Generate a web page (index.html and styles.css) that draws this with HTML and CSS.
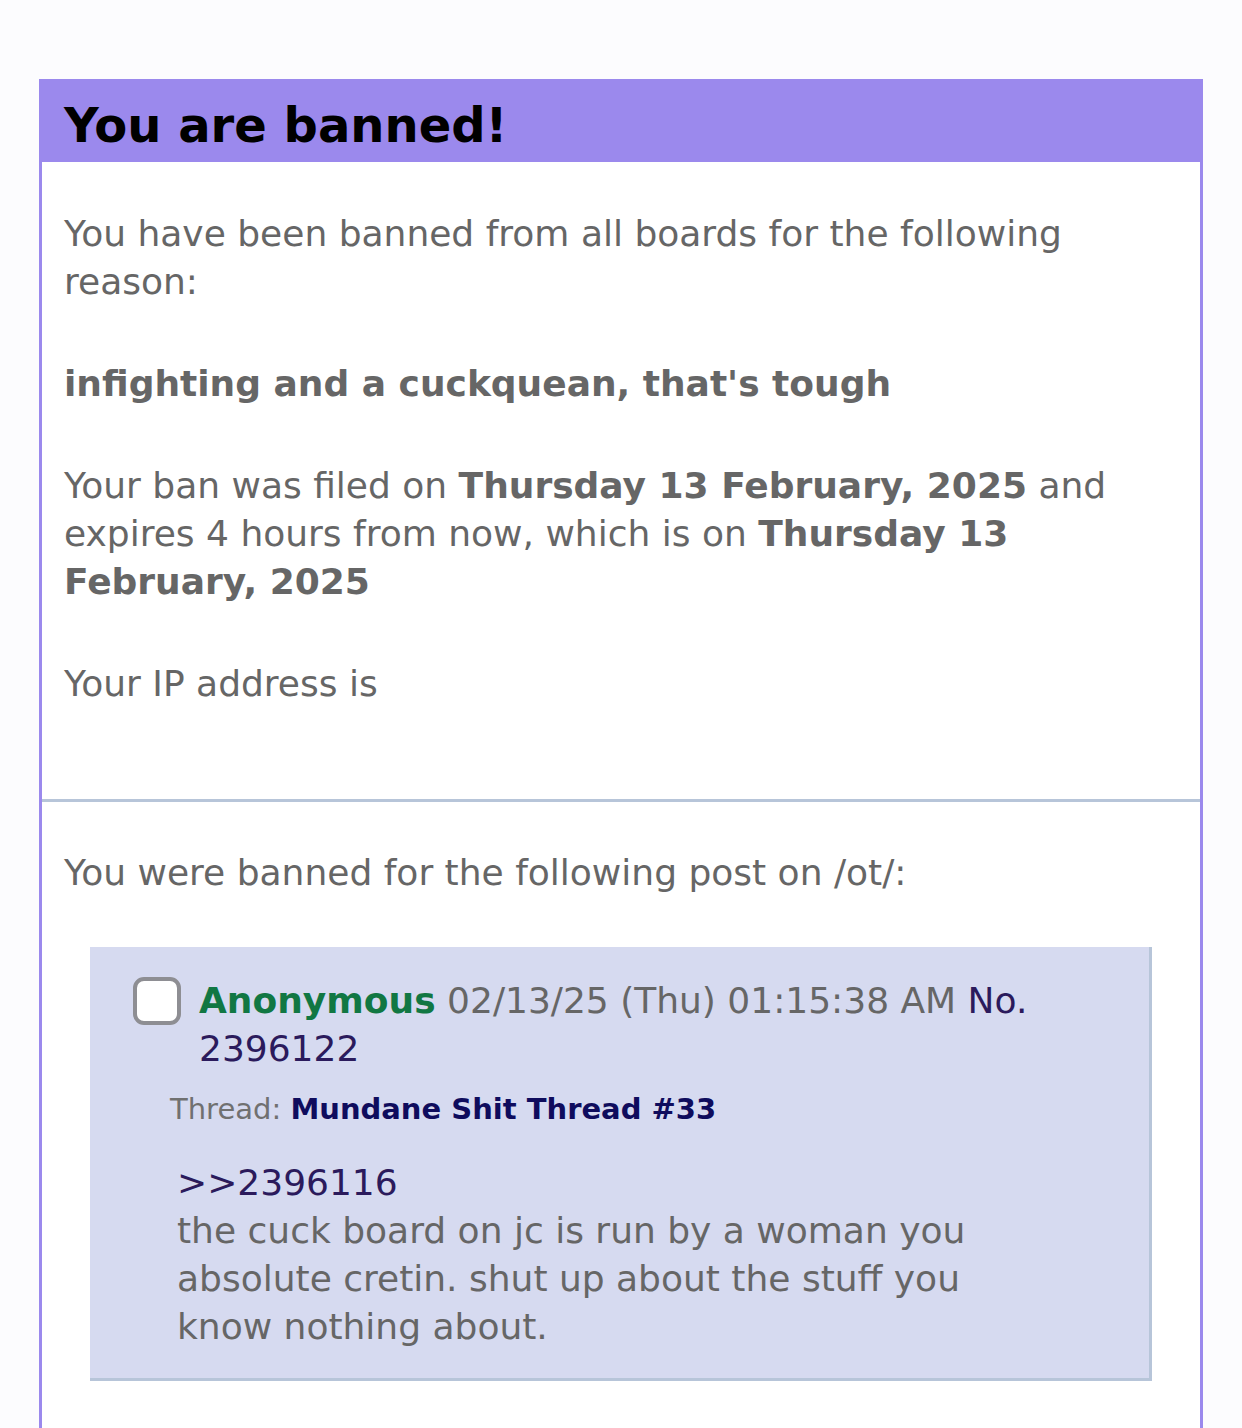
FILE: index.html
```html
<!DOCTYPE html>
<html lang="en">
<head>
    <meta charset="UTF-8">
    <meta name="viewport" content="width=device-width, initial-scale=1.0">
    <title>Banned</title>
    <link rel="stylesheet" href="styles.css">
</head>
<body>
    <div class="box">
        <h2 class="box-title">You are banned!</h2>

        <div class="box-section">
            <p>You have been banned from all boards for the following reason:</p>
            <p><strong>infighting and a cuckquean, that's tough</strong></p>
            <p>Your ban was filed on <strong>Thursday 13 February, 2025</strong> and expires 4 hours from now, which is on <strong>Thursday 13 February, 2025</strong></p>
            <p>Your IP address is<br><span class="ip-hidden"></span></p>
        </div>

        <div class="box-section second">
            <p>You were banned for the following post on /ot/:</p>

            <div class="post">
                <div class="post-info">
                    <span class="check"></span>
                    <span class="post-meta"><span class="name">Anonymous</span> 02/13/25 (Thu) 01:15:38 AM <span class="post-no">No. 2396122</span></span>
                </div>
                <div class="thread">Thread: <strong>Mundane Shit Thread #33</strong></div>
                <blockquote class="post-message">
                    <span class="quotelink">&gt;&gt;2396116</span><br>
                    the cuck board on jc is run by a woman you absolute cretin. shut up about the stuff you know nothing about.
                </blockquote>
            </div>
        </div>
    </div>
</body>
</html>
```

FILE: styles.css
```css
body {
    font-family: "DejaVu Sans", Verdana, sans-serif;
    font-size: 36px;
    line-height: 48px;
    background-color: #fcfcfe;
    color: #666;
    margin: 0;
    padding: 79px 0 0;
}

.box {
    margin: 0 39px;
    background: #fff;
    border-left: 3px solid #9b89ed;
    border-right: 3px solid #9b89ed;
}

.box-title {
    margin: 0 -3px;
    padding: 0 25px;
    height: 83px;
    line-height: 92px;
    background: #9b89ed;
    color: #000;
    font-size: 48px;
    font-weight: bold;
}

.box-section {
    padding: 48px 22px 31px;
}

.box-section.second {
    border-top: 3px solid #b7c5d9;
    padding-top: 47px;
    padding-bottom: 80px;
}

p {
    margin: 0 0 54px;
}

p:last-child {
    margin-bottom: 0;
}

.second p {
    margin-bottom: 50px;
}

strong {
    font-weight: bold;
    color: #666;
}

.ip-hidden {
    display: inline-block;
    height: 48px;
}

.post {
    margin: 0 26px;
    padding: 30px 100px 27px 43px;
    background: #d6daf0;
    border-right: 3px solid #b7c5d9;
    border-bottom: 3px solid #b7c5d9;
}

.post-info {
    display: flex;
    align-items: flex-start;
}

.check {
    flex: none;
    width: 40px;
    height: 40px;
    margin: 0 18px 0 0;
    border: 4px solid #8e8e93;
    border-radius: 11px;
    background: #fff;
}

.name {
    color: #117743;
    font-weight: bold;
}

.post-no {
    color: #2b1a5c;
}

.thread {
    margin: 17px 0 0 37px;
    font-size: 29px;
    line-height: 38px;
    color: #707070;
}

.thread strong {
    color: #0f0c5d;
}

.post-message {
    margin: 31px 0 0 44px;
}

.quotelink {
    color: #2b1a5c;
}
```
